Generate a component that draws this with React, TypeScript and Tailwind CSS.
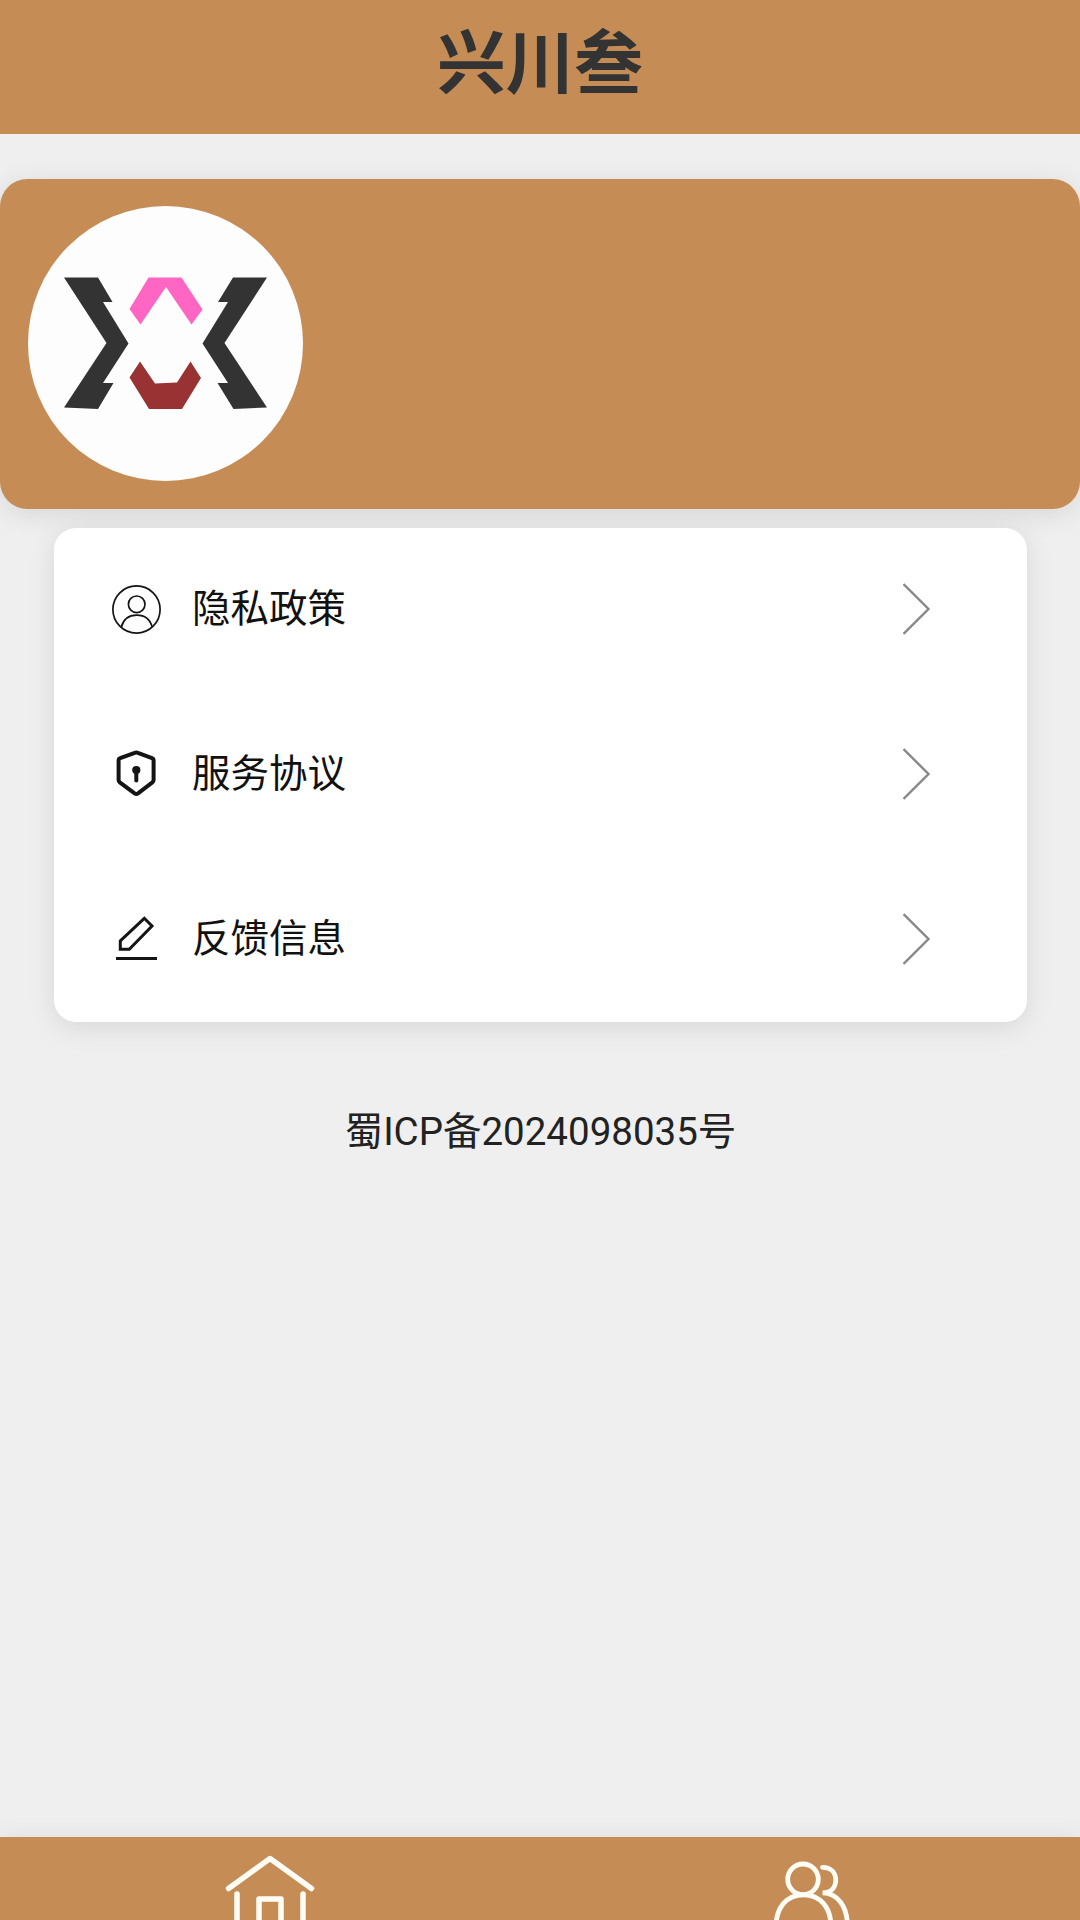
import React from "react";

const Logo = () => (
  <svg viewBox="0 0 275 275" className="size-full">
    <g fill="#333333">
      <path d="M36 71.5H70L84.5 96H75L100.5 137.5L75 177H85.5L70 203L36 201.5L78.5 137Z" />
      <path d="M239 71.5H205L190 96H200L174.5 137.5L200 177H189.5L205.5 203L239 201.5L196.5 137Z" />
    </g>
    <path
      fill="#ff66c4"
      d="M120.5 71.5H153.5L174.5 103.5L163.5 118.5L138 81L112.5 118.5L101.5 103Z"
    />
    <path
      fill="#993333"
      d="M112 155.5L127 177.5L149 176.5L162.5 155.5L173 172L154 203H121L101.5 171.5Z"
    />
  </svg>
);

const PrivacyIcon = () => (
  <svg
    viewBox="0 0 55 55"
    className="size-[55px]"
    fill="none"
    stroke="#141414"
    strokeWidth="1.7"
  >
    <circle cx="27.5" cy="27.5" r="23.6" />
    <circle cx="27.7" cy="22.3" r="8.3" />
    <path d="M12.3 45.2C14.3 37.5 20 33.2 27.7 33.2S41.2 37.5 43.2 45.2" />
  </svg>
);

const AgreementIcon = () => (
  <svg viewBox="0 0 55 55" className="size-[55px]">
    <path
      d="M25.7 6.9Q27.3 6.2 28.9 6.9L43 12.2Q44.6 12.8 44.6 14.5V34Q44.6 35.4 43.4 36.3L29 47.4Q27.300 48.600 25.600 47.400L10.800 36.300Q9.600 35.400 9.600 34V14.500Q9.600 12.800 11.200 12.200Z"
      fill="none"
      stroke="#141414"
      strokeWidth="4"
      strokeLinejoin="round"
    />
    <circle cx="27.3" cy="24" r="4.1" fill="#141414" />
    <path
      d="M27.3 24V34.500"
      stroke="#141414"
      strokeWidth="4"
      strokeLinecap="round"
    />
  </svg>
);

const FeedbackIcon = () => (
  <svg
    viewBox="0 0 55 55"
    className="size-[55px]"
    fill="none"
    stroke="#141414"
    strokeWidth="3"
  >
    <path d="M35.3 7.3L43 15L20.300 38.200H11.300V29.800Z" />
    <path d="M7 47.500H48" />
  </svg>
);

const ChevronIcon = () => (
  <svg
    viewBox="0 0 28 54"
    className="h-[54px] w-7"
    fill="none"
    stroke="#888888"
    strokeWidth="2.4"
  >
    <path d="M0.500 2L25.500 27L0.500 52" />
  </svg>
);

const HomeIcon = () => (
  <svg
    viewBox="0 0 110 110"
    className="size-[110px]"
    fill="none"
    stroke="#fffdf5"
    strokeWidth="5.500"
    strokeLinecap="round"
    strokeLinejoin="round"
  >
    <path d="M13.500 42.500L55 12.500L96.500 42.500" />
    <path d="M22 48V97H88V48" />
    <path d="M44 97V53H66V97" />
  </svg>
);

const UsersIcon = () => (
  <svg
    viewBox="0 0 110 110"
    className="size-[110px]"
    fill="none"
    stroke="#fffdf5"
    strokeWidth="4.800"
    strokeLinecap="round"
  >
    <circle cx="48" cy="33.300" r="15.300" />
    <path d="M21 81C21 61 32 48.800 48.500 48.800S76 61 76 81Z" />
    <path d="M67.500 21.300C76 21.300 80.700 26.500 80.700 34S76 46.800 67.500 46.800C83 46.800 92.500 61 92.500 81" />
  </svg>
);

const menuItems = [
  { label: "隐私政策", Icon: PrivacyIcon },
  { label: "服务协议", Icon: AgreementIcon },
  { label: "反馈信息", Icon: FeedbackIcon },
];

export default function App() {
  return (
    <div className="flex h-[1920px] w-[1080px] flex-col overflow-hidden bg-[#efefef] font-[Roboto,'Noto_Sans_CJK_SC',sans-serif]">
      <header className="flex h-[134px] shrink-0 justify-center bg-[#c58d55] pt-[15px]">
        <h1 className="text-[68.75px] leading-[100px] font-bold text-[#333333]">
          兴川叁
        </h1>
      </header>

      <main className="flex flex-1 flex-col">
        <section className="mt-[45px] flex h-[330px] items-start rounded-[27.5px] bg-[#c58d55] pt-[27px] pl-7 shadow-[0_5px_28px_rgba(0,0,0,0.1)]">
          <div className="size-[275px] overflow-hidden rounded-full bg-[#fdfdfd]">
            <Logo />
          </div>
        </section>

        <section className="mx-auto mt-[19px] h-[494px] w-[973px] rounded-[22px] bg-white shadow-[0_5px_28px_rgba(0,0,0,0.1)]">
          {menuItems.map(({ label, Icon }) => (
            <button
              key={label}
              className="flex h-1/3 w-full items-center pr-[96px] pb-[2px] pl-[55px] text-left"
            >
              <Icon />
              <span className="ml-[28.5px] flex-1 text-[38.5px] text-[#111111]">
                {label}
              </span>
              <ChevronIcon />
            </button>
          ))}
        </section>

        <p className="mt-[81px] pl-px text-center text-[38.5px] leading-[58px] text-[#222222]">
          蜀ICP备2024098035号
        </p>
      </main>

      <nav className="grid h-[83px] shrink-0 grid-cols-2 justify-items-center bg-[#c58d55] pt-[9px] shadow-[0_0_22px_rgba(0,0,0,0.08)]">
        <HomeIcon />
        <UsersIcon />
      </nav>
    </div>
  );
}
